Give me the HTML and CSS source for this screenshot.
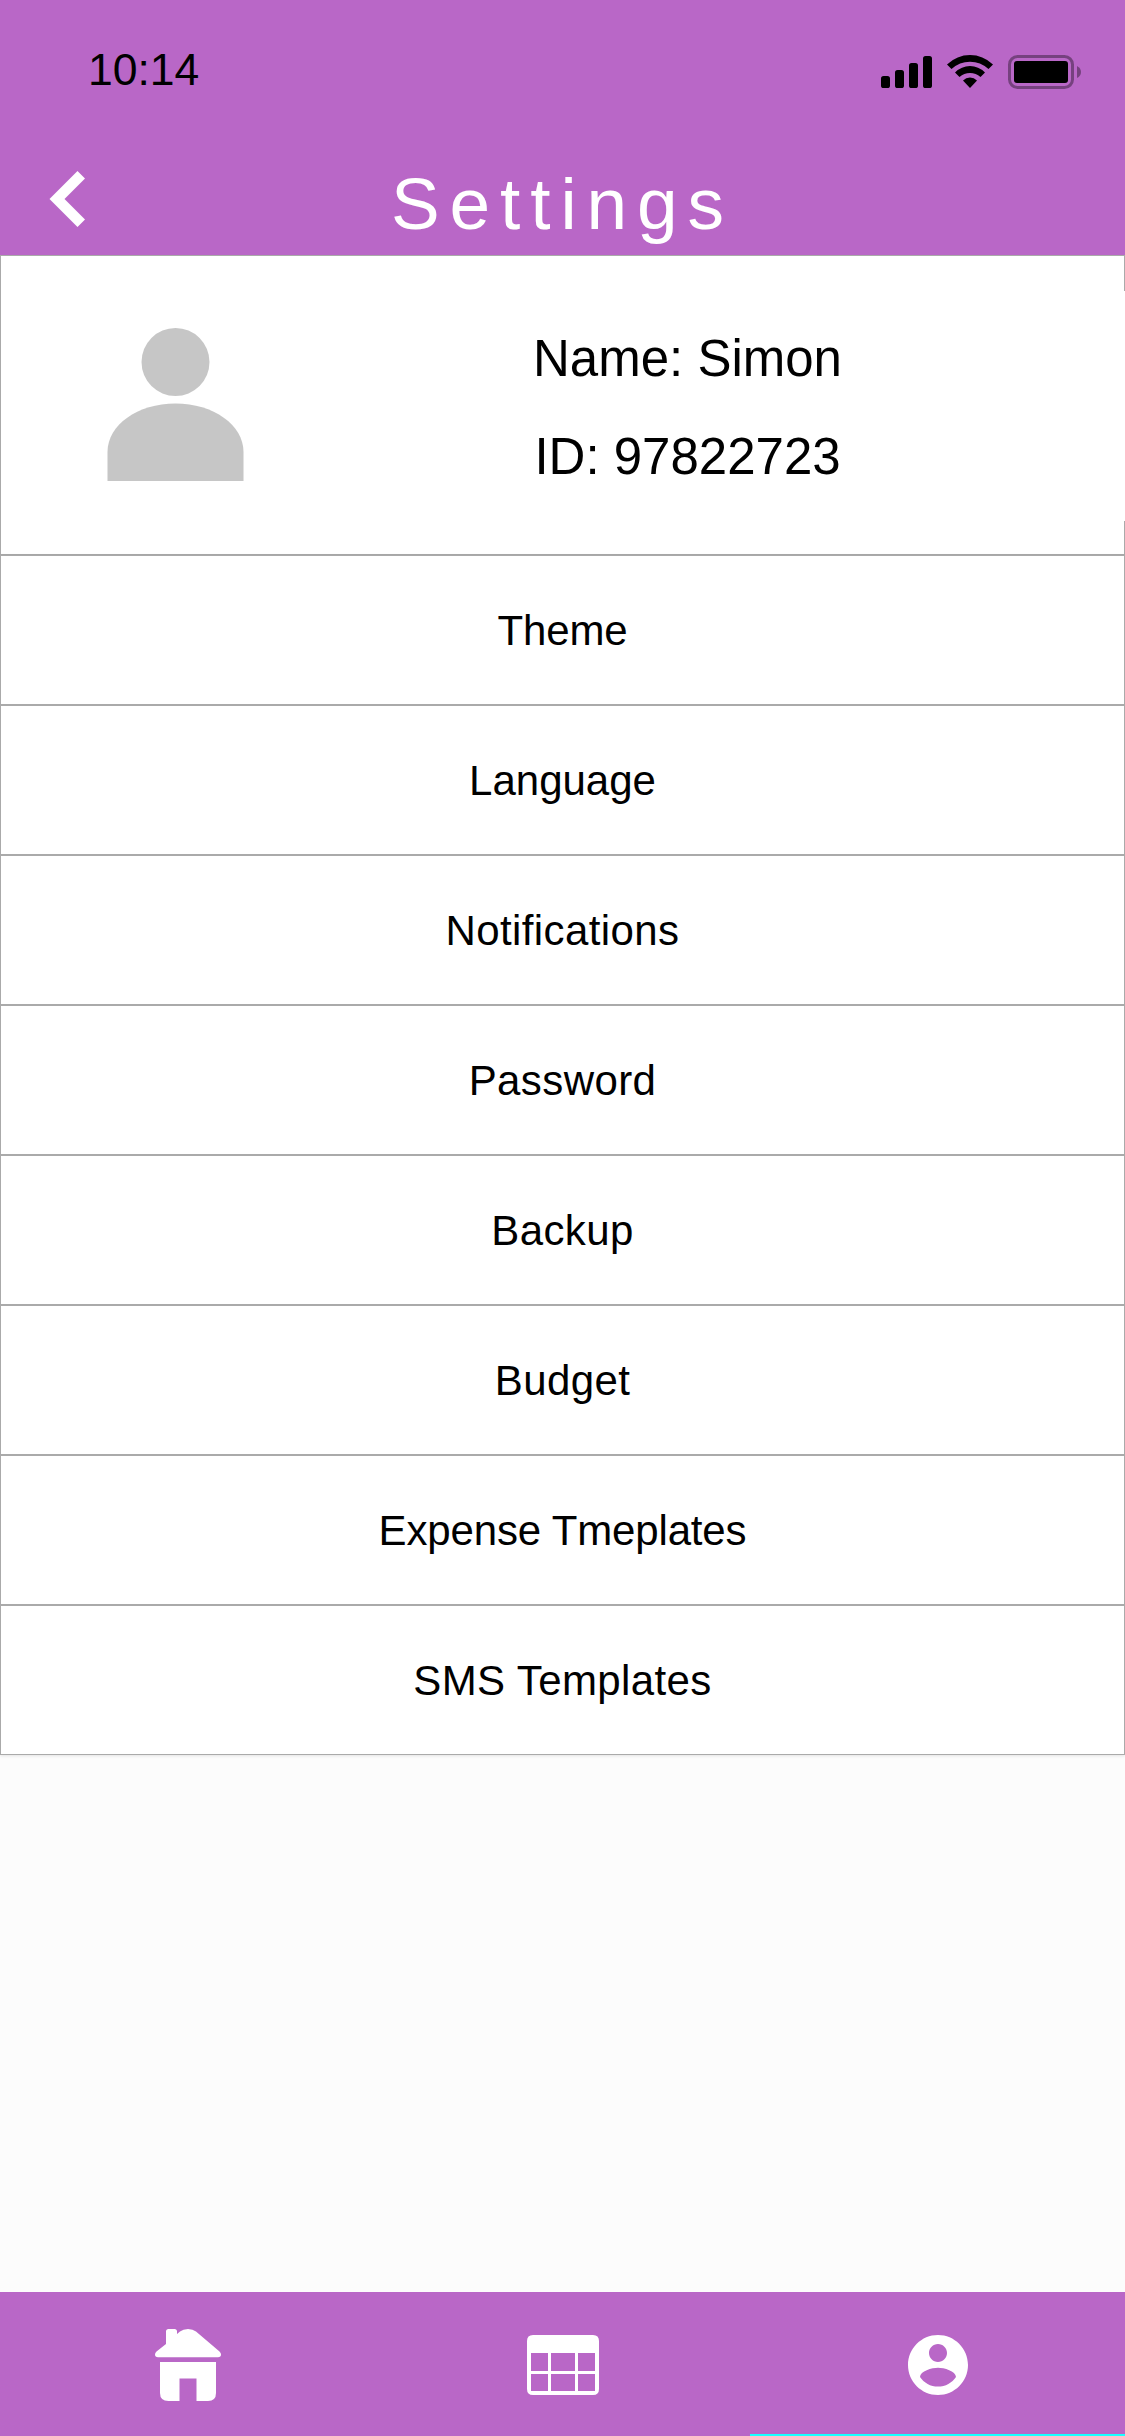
FILE: index.html
```html
<!DOCTYPE html>
<html lang="en">
<head>
<meta charset="utf-8">
<title>Settings</title>
<link rel="stylesheet" href="styles.css">
</head>
<body>
<div class="screen">
  <header class="header">
    <div class="status">
      <span class="time">10:14</span>
      <svg class="status-icons" width="204" height="36" viewBox="880 54 204 36">
        <rect x="881" y="76" width="9" height="12" rx="2.6"/>
        <rect x="895" y="70" width="9" height="18" rx="2.6"/>
        <rect x="909" y="63" width="9" height="25" rx="2.6"/>
        <rect x="923" y="56" width="9" height="32" rx="2.6"/>
        <path d="M947 64.500Q957 55 970 55T993 64.500L988.500 69Q980.500 61.700 970 61.700T951.500 69Z"/>
        <path d="M955 72.500Q961.500 66 970 66T985 72.500L980.500 77Q976 73 970 73T959.500 77Z"/>
        <path d="M963 80.500Q966 77.500 970 77.500T977 80.500L970 88Z"/>
        <rect x="1009.500" y="56.500" width="63" height="31" rx="8" fill="none" stroke="#000" stroke-width="3" opacity=".36"/>
        <path d="M1077 66Q1081 68 1081 72T1077 78Z" opacity=".36"/>
        <rect x="1014" y="61" width="54" height="22" rx="3"/>
      </svg>
    </div>
    <div class="title-bar">
      <svg class="back" width="36" height="56" viewBox="49 171 36 56"><path fill="#fff" d="M49.500 199 77.500 171 85 178.500 64.500 199 85 219.500 77.500 227Z"/></svg>
      <h1 class="title">Settings</h1>
    </div>
  </header>
  <main class="content">
    <section class="profile">
      <svg class="avatar" width="137" height="154" viewBox="-.5 0 137 154" fill="#c6c6c6">
        <circle cx="68" cy="34" r="34"/>
        <path d="M0 153V124C0 97 30 75.500 68 75.500S136 97 136 124V153Z"/>
      </svg>
      <div class="info">
        <p class="info-line">Name: Simon</p>
        <p class="info-line">ID: 97822723</p>
      </div>
    </section>
    <ul class="menu">
      <li class="item tight"><span>Theme</span></li>
      <li class="item"><span>Language</span></li>
      <li class="item loose"><span>Notifications</span></li>
      <li class="item loose"><span>Password</span></li>
      <li class="item loose"><span>Backup</span></li>
      <li class="item loose"><span>Budget</span></li>
      <li class="item tight"><span>Expense Tmeplates</span></li>
      <li class="item loose"><span>SMS Templates</span></li>
    </ul>
  </main>
  <nav class="tabs">
    <div class="tab">
      <svg width="68" height="74" viewBox="154 2328 68 74" fill="#fff">
        <path d="M166 2344V2331.500Q166 2329 168.500 2329H174.500Q177 2329 177 2331.500V2334L180 2331.500Q183 2329 188 2329T196 2331.500L219.500 2351.500Q221 2353 221 2354.500Q221 2357.300 218 2357.300H158Q155 2357.300 155 2354.500Q155 2353 156.500 2351.500Z"/>
        <path d="M160 2362H216V2393Q216 2401 208 2401H196.500V2378.500H179.500V2401H168.500Q160 2401 160 2393Z"/>
      </svg>
    </div>
    <div class="tab">
      <svg width="72" height="60" viewBox="527 2335 72 60"><path fill="#fff" fill-rule="evenodd" d="M533 2335H593Q599 2335 599 2341V2389Q599 2395 593 2395H533Q527 2395 527 2389V2341Q527 2335 533 2335ZM531 2353V2371H548V2353ZM551 2353V2371H575V2353ZM578 2353V2371H595V2353ZM531 2374V2391H548V2374ZM551 2374V2391H575V2374ZM578 2374V2391H595V2374Z"/></svg>
    </div>
    <div class="tab tab-active">
      <svg width="72" height="72" viewBox="0 0 24 24"><path fill="#fff" d="M12 2C6.480 2 2 6.480 2 12s4.480 10 10 10 10-4.480 10-10S17.520 2 12 2zm0 3c1.660 0 3 1.340 3 3s-1.340 3-3 3-3-1.340-3-3 1.340-3 3-3zm0 14.200c-2.500 0-4.710-1.280-6-3.220.03-1.990 4-3.080 6-3.080 1.990 0 5.970 1.090 6 3.080-1.290 1.940-3.500 3.220-6 3.220z"/></svg>
    </div>
  </nav>
</div>
</body>
</html>
```
FILE: styles.css
```css
* { box-sizing: border-box; }
body, h1, p, ul { margin: 0; padding: 0; }
body { font-family: "Liberation Sans", Arial, sans-serif; color: #000; }
svg { display: block; flex: none; }

.screen { display: flex; flex-direction: column; width: 1125px; height: 2436px; background: #fcfcfc; overflow: hidden; }

.header { height: 255px; background: #b967c7; }
.status { display: flex; justify-content: space-between; align-items: flex-start; height: 144px; padding: 54px 41px 0 88px; }
.time { font-size: 44.500px; line-height: 32px; }
.title-bar { display: grid; grid-template-columns: 200px 1fr 200px; height: 111px; }
.back { margin: 27px 0 0 49px; }
.title { color: #fff; font-size: 73px; font-weight: 400; line-height: 82px; letter-spacing: 9.900px; text-align: center; padding-top: 19px; white-space: nowrap; }

.content { flex: 1; }
.profile { display: flex; height: 300px; border: 1px solid #aaa; background: #fff; }
.avatar { margin: 72px 0 0 106px; }
.info { display: flex; flex-direction: column; align-items: center; width: 875px; height: 230px; margin: 35px -1px 0 6px; padding-top: 19px; flex: none; background: #fff; }
.info-line { font-size: 51px; line-height: 98px; white-space: nowrap; }

.menu { list-style: none; box-shadow: 0 1px 3px rgba(0, 0, 0, .1); }
.item { display: flex; align-items: center; justify-content: center; height: 150px; padding-top: 2px; border: 1px solid #aaa; background: #fff; font-size: 42px; line-height: 48px; }
.loose { letter-spacing: .4px; }
.tight { letter-spacing: -.15px; }

.tabs { display: grid; grid-template-columns: repeat(3, 1fr); height: 144px; background: #b967c7; }
.tab { display: flex; align-items: center; justify-content: center; border-bottom: 2px solid transparent; padding-top: 4px; }
.tab-active { border-bottom-color: #18ffff; }
```
